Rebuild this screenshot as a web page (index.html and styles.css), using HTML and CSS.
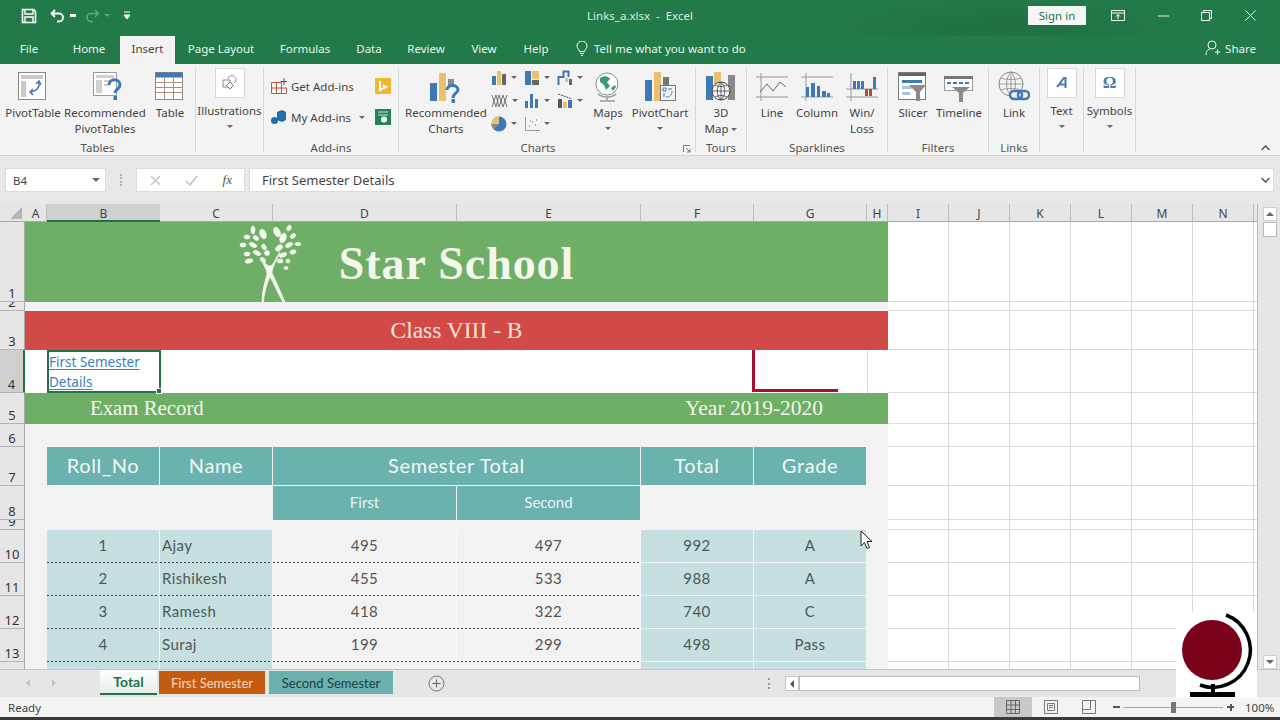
FILE: index.html
```html
<!DOCTYPE html>
<html lang="en">
<head>
  <meta charset="UTF-8">
  <meta name="viewport" content="width=device-width, initial-scale=1.0">
  <title>Links_a.xlsx - Excel</title>
  <link rel="stylesheet" href="styles.css">
</head>
<body>
<div class="app">

  <!-- title bar -->
  <div class="titlebar">
    <div class="qat">
      <svg width="16" height="16" viewBox="0 0 16 16"><path d="M1.5 1.5h11l2 2v11h-13z" fill="none" stroke="#fff" stroke-width="1.6"/><path d="M4 2v4h8V2M4 14V9h8v5" fill="none" stroke="#fff" stroke-width="1.4"/></svg>
      <svg class="undo" width="16" height="14" viewBox="0 0 16 14"><path d="M5 1L1.5 4.5 5 8M2 4.5h7a4 4 0 0 1 0 8H7" fill="none" stroke="#fff" stroke-width="1.8"/></svg>
      <span class="mini-caret white"></span>
      <svg class="redo" width="16" height="14" viewBox="0 0 16 14"><path d="M11 1l3.500 3.500L11 8M14 4.500H7a4 4 0 0 0 0 8h2" fill="none" stroke="#5fa67d" stroke-width="1.6"/></svg>
      <span class="mini-caret dim"></span>
      <svg class="custom" width="8" height="9" viewBox="0 0 8 9"><path d="M1 1h6M1 4h6L4 8z" stroke="#fff" fill="#fff"/></svg>
    </div>
    <div class="doc-title">Links_a.xlsx&nbsp; - &nbsp;Excel</div>
    <button class="signin">Sign in</button>
    <div class="winbtns">
      <svg width="14" height="12" viewBox="0 0 14 12"><path d="M.5.500h13v10H.5zM.5 3h13M7 9V4.500M5 6.500l2-2 2 2" fill="none" stroke="#fff"/></svg>
      <svg width="11" height="2" viewBox="0 0 11 2"><path d="M0 1h11" stroke="#e8f2ec"/></svg>
      <svg width="11" height="11" viewBox="0 0 11 11"><path d="M.5 2.500h8v8h-8zM2.500 2.500v-2h8v8h-2" fill="none" stroke="#fff"/></svg>
      <svg width="11" height="11" viewBox="0 0 11 11"><path d="M.5.500l10 10M10.500.500l-10 10" stroke="#fff"/></svg>
    </div>
  </div>

  <!-- tabs -->
  <div class="tabs">
    <span class="tab t-file">File</span>
    <span class="tab t-home">Home</span>
    <span class="tab active">Insert</span>
    <span class="tab t-layout">Page Layout</span>
    <span class="tab t-formulas">Formulas</span>
    <span class="tab t-data">Data</span>
    <span class="tab t-review">Review</span>
    <span class="tab t-view">View</span>
    <span class="tab t-help">Help</span>
    <svg class="bulb" width="12" height="15" viewBox="0 0 12 15"><path d="M3.500 10.500C3 8 1 7.500 1 5a5 5 0 0 1 10 0c0 2.500-2 3-2.500 5.500zM4 12.500h4M5 14.500h2" fill="none" stroke="#fff"/></svg>
    <span class="tab tellme">Tell me what you want to do</span>
    <span class="share">
      <svg width="16" height="16" viewBox="0 0 16 16"><circle cx="7" cy="5" r="4" fill="none" stroke="#fff"/><path d="M1 15c0-4 2-5.500 4-6M10 12h5M12.500 9.500v5" fill="none" stroke="#fff"/></svg>
      Share
    </span>
  </div>

  <!-- ribbon -->
  <div class="ribbon">
    <div class="group g-tables">
      <div class="gbody pad6">
        <div class="btn w54">
          <svg class="ico" width="30" height="30" viewBox="0 0 30 30"><rect x=".5" y=".5" width="27" height="27" fill="#fff" stroke="#8a8a8a"/><path d="M3 3h22v4H3zM3 9h5v16H3z" fill="#c9c9c9"/><path d="M21 10c1 5-2 9-8 10M18 12l3-3 2 4M15 17l-3 3 3 3" fill="none" stroke="#3f78b5" stroke-width="1.500"/></svg>
          <span>PivotTable</span>
        </div>
        <div class="btn w84 gap3">
          <svg class="ico nudge" width="30" height="30" viewBox="0 0 30 30"><rect x=".5" y=".5" width="23" height="23" fill="#fff" stroke="#9a9a9a"/><path d="M3 3h18v3H3zM3 8h6v13H3zM11 8h8v2h-8zM11 12h5v2h-5z" fill="#cfcfcf"/><path d="M16 13c0-7 11-7 11 0 0 4-5 4-5 8" fill="none" stroke="#3f78b5" stroke-width="3"/><rect x="20.500" y="24" width="3.500" height="4" fill="#3f78b5"/></svg>
          <span>Recommended<br>PivotTables</span>
        </div>
        <div class="btn w46">
          <svg class="ico" width="30" height="30" viewBox="0 0 30 30"><rect x=".5" y=".5" width="27" height="27" fill="#fff" stroke="#8a8a8a"/><rect x=".5" y=".5" width="27" height="5" fill="#3f78b5"/><path d="M1 10.500h27M1 15.500h27M1 20.500h27M9.500 5v23M18.500 5v23" stroke="#b58b7a"/></svg>
          <span>Table</span>
        </div>
      </div>
      <div class="glabel">Tables</div>
    </div>

    <div class="group g-illus">
      <div class="gbody">
        <div class="btn full boxed">
          <div class="box">
            <svg width="16" height="16" viewBox="0 0 16 16"><path d="M1 5h7v7H1z" fill="none" stroke="#8a8a8a"/><path d="M6 4a4 4 0 1 1 6 4" fill="none" stroke="#6f9fca"/><path d="M8 7l3.500 3.500L8 14l-3.500-3.500z" fill="#fff" stroke="#777"/></svg>
          </div>
          <span>Illustrations</span>
          <i class="caret"></i>
        </div>
      </div>
    </div>

    <div class="group g-addins">
      <div class="gbody addins">
        <div class="addin-row">
          <svg width="16" height="16" viewBox="0 0 16 16"><path d="M.5 4.500h10v11H.5zM.5 10h15v5.500h-5M5.500 4.500v11" fill="none" stroke="#c0574a"/><path d="M13 0v7M9.500 3.500h7" stroke="#555"/></svg>
          <span class="addin-name">Get Add-ins</span>
          <svg class="addin-end" width="16" height="16" viewBox="0 0 16 16"><rect width="16" height="16" rx="1" fill="#f2b632"/><path d="M5 3v9l6-3-3-1.500" fill="none" stroke="#fff" stroke-width="2"/></svg>
        </div>
        <div class="addin-row">
          <svg width="16" height="16" viewBox="0 0 16 16"><path d="M6 3l5-2 4 2v8l-4 2-5-2z" fill="#1f6fb2"/><circle cx="3.500" cy="11.500" r="3.500" fill="#1f6fb2"/></svg>
          <span class="addin-name">My Add-ins</span>
          <i class="caret inline wide"></i>
          <svg class="addin-end" width="16" height="16" viewBox="0 0 16 16"><rect width="16" height="16" fill="#21845a"/><path d="M3 3h10M3 6h10" stroke="#cfe7da"/><circle cx="9" cy="10.500" r="3" fill="#fff"/></svg>
        </div>
      </div>
      <div class="glabel">Add-ins</div>
    </div>

    <div class="group g-charts">
      <div class="gbody pad5">
        <div class="btn w84">
          <svg class="ico" width="34" height="32" viewBox="0 0 34 32"><rect x="1" y="12" width="7" height="18" fill="#3f78b5"/><rect x="10" y="2" width="7" height="28" fill="#e8c16a"/><rect x="19" y="8" width="6" height="8" fill="#8a8a8a"/><path d="M18 19c0-6 11-6 11 0 0 3-5 3-5 8" fill="none" stroke="#3f78b5" stroke-width="3"/><rect x="22.500" y="28" width="3.500" height="4" fill="#3f78b5"/></svg>
          <span>Recommended<br>Charts</span>
        </div>
        <div class="minis">
          <div class="mini"><svg width="16" height="16" viewBox="0 0 16 16"><rect x="1" y="6" width="4" height="9" fill="#3f78b5"/><rect x="6" y="1" width="4" height="14" fill="#e8c16a"/><rect x="11" y="4" width="4" height="11" fill="#666"/></svg><i class="caret inline"></i></div>
          <div class="mini"><svg width="16" height="16" viewBox="0 0 16 16"><rect x="1" y="1" width="6" height="14" fill="#3f78b5"/><rect x="8" y="1" width="7" height="8" fill="#e8c16a"/><rect x="8" y="10" width="7" height="5" fill="#666"/></svg><i class="caret inline"></i></div>
          <div class="mini"><svg width="16" height="16" viewBox="0 0 16 16"><path d="M1.500 15V7h5V1.500h5V7M13 9v6" fill="none" stroke="#3f78b5" stroke-width="2"/><rect x="8" y="8" width="3" height="4" fill="#e8c16a"/><rect x="12" y="9" width="3" height="6" fill="#666"/></svg><i class="caret inline"></i></div>
          <div class="mini"><svg width="17" height="16" viewBox="0 0 17 16"><path d="M1 14L5 2l3 12 4-12 4 12M1 2l4 12 3-12 4 12 4-12" fill="none" stroke="#666" stroke-width=".9"/></svg><i class="caret inline"></i></div>
          <div class="mini"><svg width="16" height="16" viewBox="0 0 16 16"><path d="M1 8h3v7H1zM6 1h3v14H6zM11 6h3v9h-3z" fill="#3f78b5"/></svg><i class="caret inline"></i></div>
          <div class="mini"><svg width="16" height="16" viewBox="0 0 16 16"><rect x="1" y="6" width="4" height="9" fill="#555"/><rect x="6" y="9" width="4" height="6" fill="#e8c16a"/><rect x="11" y="7" width="4" height="8" fill="#3f78b5"/><path d="M1 1l6 2 8 3" stroke="#555" stroke-dasharray="2 1"/></svg><i class="caret inline"></i></div>
          <div class="mini"><svg width="16" height="16" viewBox="0 0 16 16"><circle cx="8" cy="8" r="7.500" fill="#3f78b5"/><path d="M8 8V.5A7.500 7.500 0 0 0 .5 8z" fill="#e8c16a"/><path d="M8 8H.5A7.500 7.500 0 0 0 3 13.500z" fill="#8a8a8a"/></svg><i class="caret inline"></i></div>
          <div class="mini"><svg width="16" height="16" viewBox="0 0 16 16"><path d="M1.500 1v13.500H16" fill="none" stroke="#999"/><path d="M5 10h1M8 6h1M11 9h1M12 4h1M6 5h1" stroke="#c08a6a" stroke-width="1.500"/></svg><i class="caret inline"></i></div>
        </div>
        <div class="btn w38">
          <svg class="ico" width="30" height="32" viewBox="0 0 30 32"><circle cx="14" cy="13" r="11" fill="#fff" stroke="#8a8a8a"/><path d="M7 7c4-3 9-2 10 1l-3 3 3 4-4 4-2-5-4-3zM18 17l4-3 1 2-3 4z" fill="#3d9a78"/><path d="M5 23c5 4 13 4 18 0M14 26v3M7 30h15" fill="none" stroke="#999" stroke-width="1.500"/></svg>
          <span>Maps</span>
          <i class="caret"></i>
        </div>
        <div class="btn w66">
          <svg class="ico" width="32" height="32" viewBox="0 0 32 32"><rect x="1" y="9" width="7" height="21" fill="#3f78b5"/><rect x="10" y="1" width="7" height="29" fill="#e8c16a"/><rect x="19" y="6" width="6" height="10" fill="#777"/><rect x="16.500" y="14.500" width="15" height="15" fill="#f3f3f3" stroke="#777"/><path d="M19 17h3v3h-3zM24 18h4M20 22v4M28 20c0 4-2 6-6 6" fill="none" stroke="#3f78b5"/></svg>
          <span>PivotChart</span>
          <i class="caret"></i>
        </div>
      </div>
      <div class="glabel charts-label">Charts</div>
      <svg class="launcher" width="8" height="8" viewBox="0 0 8 8"><path d="M.5 7V.5H7M3 3l4 4M7 4v3H4" fill="none" stroke="#777"/></svg>
    </div>

    <div class="group g-tours">
      <div class="gbody">
        <div class="btn full">
          <svg class="ico" width="32" height="32" viewBox="0 0 32 32"><rect x="1" y="5" width="7" height="24" fill="#3f78b5"/><rect x="9" y="1" width="7" height="12" fill="#e8c16a"/><rect x="23" y="4" width="7" height="25" fill="#8a8a8a"/><circle cx="16" cy="20" r="9" fill="#f3f3f3" stroke="#444"/><path d="M7 20h18M16 11v18M10 14c4 2 8 2 12 0M10 26c4-2 8-2 12 0M16 11c-5 5-5 13 0 18M16 11c5 5 5 13 0 18" fill="none" stroke="#444" stroke-width=".8"/></svg>
          <span>3D<br>Map<i class="caret inline tight"></i></span>
        </div>
      </div>
      <div class="glabel">Tours</div>
    </div>

    <div class="group g-spark">
      <div class="gbody pad2">
        <div class="btn w46">
          <svg class="ico" width="32" height="28" viewBox="0 0 32 28"><path d="M5 0v28M0 4h32M0 24h32" stroke="#999"/><path d="M4 19l7-8 6 7 7-9 6 5" fill="none" stroke="#666"/></svg>
          <span>Line</span>
        </div>
        <div class="btn w44">
          <svg class="ico" width="32" height="28" viewBox="0 0 32 28"><path d="M5 0v28M0 4h32M0 24h32" stroke="#999"/><path d="M5 14h3v10H5zM10 10h4v14h-4zM16 13h3v11h-3zM21 18h4v6h-4zM26 20h3v4h-3z" fill="#3f78b5"/></svg>
          <span>Column</span>
        </div>
        <div class="btn w46">
          <svg class="ico" width="32" height="28" viewBox="0 0 32 28"><path d="M5 0v28M0 16h32M0 24h32" stroke="#999"/><path d="M7 8h3v8H7zM11 8h3v8h-3zM15 8h3v8h-3zM27 4h3v12h-3z" fill="#3f78b5"/><path d="M19 16h3v7h-3zM23 16h3v7h-3z" fill="#b5483a"/></svg>
          <span>Win/<br>Loss</span>
        </div>
      </div>
      <div class="glabel">Sparklines</div>
    </div>

    <div class="group g-filters">
      <div class="gbody pad2">
        <div class="btn w46">
          <svg class="ico" width="30" height="30" viewBox="0 0 30 30"><rect x=".5" y=".5" width="27" height="27" fill="#fff" stroke="#7a7a7a"/><rect x="1" y="1" width="27" height="3" fill="#666"/><path d="M4 8h20v3H4z" fill="#3f78b5"/><path d="M4 14h10v3H4zM4 20h8v3H4z" fill="#a9c3de"/><path d="M11 13h17l-6 7v9h-4v-9z" fill="#8a8a8a"/></svg>
          <span>Slicer</span>
        </div>
        <div class="btn w46">
          <svg class="ico" width="30" height="30" viewBox="0 0 30 30"><rect x=".5" y="4.500" width="28" height="14" fill="#fff" stroke="#999"/><rect y="4" width="29" height="3" fill="#777"/><path d="M3 11h4M9 11h4M15 11h4M21 11h4" stroke="#3f78b5" stroke-width="2"/><path d="M8 15h18l-7 6v9h-4v-9z" fill="#8a8a8a"/></svg>
          <span>Timeline</span>
        </div>
      </div>
      <div class="glabel">Filters</div>
    </div>

    <div class="group g-links">
      <div class="gbody">
        <div class="btn full">
          <svg class="ico" width="32" height="32" viewBox="0 0 32 32"><circle cx="13" cy="13" r="12" fill="none" stroke="#8a8a8a"/><path d="M1 13h24M13 1v24M3 7c6 2 14 2 20 0M3 19c6-2 14-2 20 0M13 1c-6 7-6 17 0 24M13 1c6 7 6 17 0 24" fill="none" stroke="#8a8a8a" stroke-width=".8"/><rect x="12" y="20" width="12" height="8" rx="4" fill="#f3f3f3" stroke="#3f78b5" stroke-width="2.500"/><rect x="20" y="20" width="11" height="8" rx="4" fill="none" stroke="#3f78b5" stroke-width="2.500"/></svg>
          <span>Link</span>
        </div>
      </div>
      <div class="glabel">Links</div>
    </div>

    <div class="group g-text">
      <div class="gbody">
        <div class="btn full boxed">
          <div class="box"><svg width="12" height="12" viewBox="0 0 12 12"><path d="M1 10L8 1h1.500v10M3.500 7.500H10" fill="none" stroke="#4a79ad" stroke-width="2"/></svg></div>
          <span>Text</span>
          <i class="caret"></i>
        </div>
      </div>
    </div>

    <div class="group g-symbols">
      <div class="gbody">
        <div class="btn full boxed">
          <div class="box omega">&#937;</div>
          <span>Symbols</span>
          <i class="caret"></i>
        </div>
      </div>
    </div>

    <svg class="collapse" width="9" height="6" viewBox="0 0 9 6"><path d="M.5 5l4-4 4 4" fill="none" stroke="#555" stroke-width="1.500"/></svg>
  </div>

  <!-- formula bar -->
  <div class="formula">
    <div class="namebox">B4<i class="caret"></i></div>
    <div class="fdots"></div>
    <div class="fbtns">
      <svg width="11" height="11" viewBox="0 0 11 11"><path d="M1 1l9 9M10 1l-9 9" stroke="#c4c4c4" stroke-width="1.500"/></svg>
      <svg width="13" height="11" viewBox="0 0 13 11"><path d="M1 6l4 4 7-9" fill="none" stroke="#c4c4c4" stroke-width="1.500"/></svg>
      <span class="fx">fx</span>
    </div>
    <div class="finput">First Semester Details
      <svg width="9" height="6" viewBox="0 0 9 6"><path d="M.5 1l4 4 4-4" fill="none" stroke="#555" stroke-width="1.500"/></svg>
    </div>
  </div>

  <!-- sheet -->
  <div class="sheetwrap">
    <div class="sheet">
      <div class="corner"><i></i></div>
      <div class="ch">A</div><div class="ch sel">B</div><div class="ch">C</div><div class="ch">D</div><div class="ch">E</div><div class="ch">F</div><div class="ch">G</div><div class="ch">H</div><div class="ch">I</div><div class="ch">J</div><div class="ch">K</div><div class="ch">L</div><div class="ch">M</div><div class="ch">N</div><div class="ch"></div>

      <div class="rh">1</div>
      <div class="c green title s8">
        <svg class="tree" width="62" height="78" viewBox="0 0 62 78">
          <g fill="#f4f8ee" stroke="#f4f8ee" stroke-width=".7">
            <ellipse cx="14" cy="6" rx="2" ry="4"/><ellipse cx="24" cy="10" rx="3" ry="5" transform="rotate(-20 24 10)"/>
            <ellipse cx="38" cy="8" rx="3" ry="5" transform="rotate(-25 38 8)"/><ellipse cx="50" cy="4" rx="2" ry="3" transform="rotate(30 50 4)"/>
            <ellipse cx="8" cy="13" rx="3" ry="2"/><ellipse cx="17" cy="14" rx="3" ry="2" transform="rotate(35 17 14)"/>
            <ellipse cx="44" cy="14" rx="3" ry="5" transform="rotate(20 44 14)"/><ellipse cx="54" cy="12" rx="3" ry="2" transform="rotate(-35 54 12)"/>
            <ellipse cx="4" cy="21" rx="3" ry="2"/><ellipse cx="14" cy="21" rx="4" ry="2" transform="rotate(25 14 21)"/>
            <ellipse cx="25" cy="23" rx="3" ry="2" transform="rotate(60 25 23)"/><ellipse cx="40" cy="24" rx="4" ry="2.500" transform="rotate(-40 40 24)"/>
            <ellipse cx="50" cy="21" rx="4" ry="2" transform="rotate(-25 50 21)"/><ellipse cx="59" cy="20" rx="3" ry="1.500"/>
            <ellipse cx="8" cy="30" rx="3" ry="2"/><ellipse cx="18" cy="29" rx="4" ry="2" transform="rotate(25 18 29)"/>
            <ellipse cx="44" cy="31" rx="4" ry="2" transform="rotate(-20 44 31)"/><ellipse cx="54" cy="28" rx="3" ry="2" transform="rotate(-15 54 28)"/>
            <ellipse cx="10" cy="37" rx="4" ry="2" transform="rotate(-15 10 37)"/><ellipse cx="24" cy="36" rx="3" ry="2" transform="rotate(40 24 36)"/>
            <ellipse cx="41" cy="37" rx="3" ry="2"/><ellipse cx="49" cy="37" rx="2" ry="2"/><ellipse cx="47" cy="44" rx="2" ry="1.500"/>
            <circle cx="28" cy="29" r="2.500"/>
            <path d="M22 33c2 8 5 11 6 16 0 4-5 14-5 29h1.500c1-11 4-20 6.500-25 4 6 8 17 13 25h2c-4-9-9-21-13-29 0-6 6-15 8-21-4 5-6 13-10 14-4 0-6-5-9-9z"/>
          </g>
        </svg>
        Star School
      </div>
      <div class="blank"></div>

      <div class="rh">2</div><div class="c s8"></div><div class="blank"></div>

      <div class="rh">3</div><div class="c red s8">Class VIII - B</div><div class="blank"></div>

      <div class="rh sel">4</div>
      <div class="c white"></div>
      <div class="c white active-cell"><a>First Semester<br>Details</a><i class="handle"></i></div>
      <div class="c white s4"></div>
      <div class="c white"><i class="crimson"></i></div>
      <div class="c white lined"></div>
      <div class="blank"></div>

      <div class="rh">5</div>
      <div class="c green exam s5">Exam Record</div>
      <div class="c green year s2">Year 2019-2020</div>
      <div class="c green"></div>
      <div class="blank"></div>

      <div class="rh">6</div><div class="c s8"></div><div class="blank"></div>

      <div class="rh">7</div>
      <div class="c"></div>
      <div class="c head">Roll_No</div>
      <div class="c head">Name</div>
      <div class="c head s2">Semester Total</div>
      <div class="c head">Total</div>
      <div class="c head">Grade</div>
      <div class="c"></div>
      <div class="blank"></div>

      <div class="rh">8</div>
      <div class="c s3"></div>
      <div class="c subhead">First</div>
      <div class="c subhead">Second</div>
      <div class="c s3"></div>
      <div class="blank"></div>

      <div class="rh">9</div><div class="c s8"></div><div class="blank"></div>

      <div class="rh">10</div>
      <div class="c"></div><div class="c pale dot mid">1</div><div class="c pale dot left">Ajay</div><div class="c dot mid">495</div><div class="c dot mid">497</div><div class="c pale mid">992</div><div class="c pale mid">A</div><div class="c"></div>
      <div class="blank"></div>

      <div class="rh">11</div>
      <div class="c"></div><div class="c pale dot mid">2</div><div class="c pale dot left">Rishikesh</div><div class="c dot mid">455</div><div class="c dot mid">533</div><div class="c pale mid">988</div><div class="c pale mid">A</div><div class="c"></div>
      <div class="blank"></div>

      <div class="rh">12</div>
      <div class="c"></div><div class="c pale dot mid">3</div><div class="c pale dot left">Ramesh</div><div class="c dot mid">418</div><div class="c dot mid">322</div><div class="c pale mid">740</div><div class="c pale mid">C</div><div class="c"></div>
      <div class="blank"></div>

      <div class="rh">13</div>
      <div class="c"></div><div class="c pale dot mid">4</div><div class="c pale dot left">Suraj</div><div class="c dot mid">199</div><div class="c dot mid">299</div><div class="c pale mid">498</div><div class="c pale mid">Pass</div><div class="c"></div>
      <div class="blank"></div>

      <div class="rh"></div>
      <div class="c"></div><div class="c pale"></div><div class="c pale"></div><div class="c"></div><div class="c"></div><div class="c pale"></div><div class="c pale"></div><div class="c"></div>
      <div class="blank"></div>
    </div>

    <div class="vscroll">
      <div class="sbtn"><span class="up"></span></div>
      <div class="thumb"></div>
      <div class="sfill"></div>
      <div class="sbtn"><span class="down"></span></div>
    </div>
  </div>

  <!-- sheet tabs -->
  <div class="sheetbar">
    <div class="nav"><span class="arrow l"></span><span class="arrow r"></span></div>
    <div class="stab total">Total</div>
    <div class="stab first">First Semester</div>
    <div class="stab second">Second Semester</div>
    <svg class="addsheet" width="17" height="17" viewBox="0 0 17 17"><circle cx="8.500" cy="8.500" r="7.500" fill="none" stroke="#777"/><path d="M8.500 4.500v8M4.500 8.500h8" stroke="#666"/></svg>
    <div class="bardots"></div>
    <div class="hscroll"><span class="hbtn"><span class="left-arrow"></span></span><span class="hthumb"></span></div>
  </div>

  <!-- status bar -->
  <div class="status">
    <span class="ready">Ready</span>
    <div class="views">
      <span class="view on"><svg width="14" height="14" viewBox="0 0 14 14"><path d="M.5.500h13v13H.5zM.5 5h13M.5 9.500h13M5 .5v13M9.500.5v13" fill="none" stroke="#666"/></svg></span>
      <span class="view"><svg width="14" height="14" viewBox="0 0 14 14"><path d="M.5.500h13v13H.5zM3.500 3.500h7v7h-7zM5 5.500h4M5 7.500h4" fill="none" stroke="#777"/></svg></span>
      <span class="view"><svg width="14" height="14" viewBox="0 0 14 14"><path d="M.5.500h13v13H.5zM.5 9.500h8V.5" fill="none" stroke="#777"/></svg></span>
    </div>
    <div class="zoom">
      <span class="zsign"></span>
      <span class="ztrack"><i></i></span>
      <span class="zsign plus"></span>
      <span class="zval">100%</span>
    </div>
  </div>

  <!-- things lying over the window -->
  <svg class="cursor" width="14" height="20" viewBox="0 0 14 20"><path d="M1 1v15l3.500-3.500 2.500 6 2.500-1-2.500-6H12z" fill="#fff" stroke="#222"/></svg>
  <div class="watermark">
    <svg width="80" height="86" viewBox="0 0 80 86">
      <circle cx="36" cy="38" r="30" fill="#7b0019"/>
      <path d="M50 3A37 37 0 1 1 24 73" fill="none" stroke="#000" stroke-width="3.500"/>
      <path d="M37 72v8" stroke="#000" stroke-width="4"/>
      <rect x="14" y="80" width="45" height="5" fill="#000"/>
    </svg>
  </div>
</div>
</body>
</html>
```

FILE: styles.css
```css
* {
  box-sizing: border-box;
}

html, body {
  margin: 0;
  height: 100%;
  overflow: hidden;
}

body {
  font-family: "Noto Sans", "Open Sans", sans-serif;
  font-size: 11.5px;
  color: #444;
  background: #f3f3f3;
}

.app {
  position: relative;
  width: 1280px;
  height: 720px;
  overflow: hidden;
  display: flex;
  flex-direction: column;
}

/* title bar */
.titlebar {
  height: 36px;
  padding-bottom: 5px;
  background: radial-gradient(ellipse 200px 40px at 1000px 30px, #1f6f42, #237a49 90%);
  background-color: #237a49;
  display: flex;
  align-items: center;
  color: #dcebe2;
  position: relative;
}

.qat {
  display: flex;
  align-items: center;
  padding-left: 21px;
  width: 200px;
}

.undo { margin-left: 13px; }
.redo { margin-left: 8px; }
.custom { margin-left: 13px; }

.mini-caret {
  width: 0;
  height: 0;
  margin-left: 4px;
  border: 3px solid transparent;
  border-top-color: #fff;
  border-bottom: 0;
}

.mini-caret.dim { border-top-color: #5fa67d; }

.doc-title {
  flex: 1;
  text-align: center;
  padding-left: 52px;
}

.signin {
  width: 58px;
  height: 19px;
  border: 0;
  padding: 0;
  background: #f4f7f4;
  color: #217346;
  font: 11.5px "Noto Sans", sans-serif;
  margin-right: 25px;
}

.winbtns {
  width: 169px;
  display: flex;
  align-items: center;
  justify-content: space-between;
  padding: 0 24px 0 0;
}

/* tabs */
.tabs {
  height: 28px;
  background: #237a49;
  display: flex;
  align-items: stretch;
  color: #eaf3ee;
  position: relative;
}

.tab {
  display: flex;
  align-items: center;
  justify-content: center;
  padding-bottom: 3px;
}

.t-file { width: 58px; }
.t-home { width: 62px; }
.tab.active { width: 55px; background: #f3f3f3; color: #444; }
.t-layout { width: 92px; }
.t-formulas { width: 76px; }
.t-data { width: 52px; }
.t-review { width: 62px; }
.t-view { width: 54px; }
.t-help { width: 50px; }
.bulb { align-self: center; margin: -3px 0 0 15px; }
.tellme { margin-left: 6px; }

.share {
  position: absolute;
  right: 24px;
  top: 4px;
  display: flex;
  align-items: center;
  gap: 4px;
}

/* ribbon */
.ribbon {
  height: 92px;
  background: #f3f3f3;
  border-bottom: 1px solid #d2d2d2;
  display: flex;
  padding-top: 4px;
  position: relative;
}

.group {
  height: 84px;
  border-right: 1px solid #d8d8d8;
  display: flex;
  flex-direction: column;
  position: relative;
}

.g-tables { width: 196px; }
.g-illus { width: 68px; }
.g-addins { width: 135px; }
.g-charts { width: 297px; }
.g-tours { width: 51px; }
.g-spark { width: 141px; }
.g-filters { width: 101px; }
.g-links { width: 51px; }
.g-text { width: 44px; }
.g-symbols { width: 52px; }

.gbody {
  height: 73px;
  flex: none;
  display: flex;
}

.pad6 { padding-left: 6px; }
.pad5 { padding-left: 5px; }
.pad2 { padding-left: 2px; }

.glabel {
  height: 14px;
  flex: none;
  line-height: 14px;
  text-align: center;
  color: #555;
}

.charts-label { padding-right: 18px; }

.btn {
  display: flex;
  flex-direction: column;
  align-items: center;
  text-align: center;
  line-height: 16px;
  white-space: nowrap;
}

.btn .ico {
  height: 32px;
  margin: 3px 0 2px;
}

.btn .ico.nudge { margin-left: 6px; }

.w38 { width: 38px; }
.w44 { width: 44px; }
.w46 { width: 46px; }
.w54 { width: 54px; }
.w66 { width: 66px; }
.w84 { width: 84px; }
.gap3 { margin-left: 3px; }
.full { width: 100%; }

.box {
  width: 30px;
  height: 30px;
  background: #fff;
  border: 1px solid #d8d8d8;
  display: flex;
  align-items: center;
  justify-content: center;
  margin-bottom: 5px;
}

.omega {
  font: bold 17px "Liberation Serif", serif;
  color: #4a79ad;
}

.caret {
  display: block;
  width: 0;
  height: 0;
  margin-top: 6px;
  border: 3px solid transparent;
  border-top-color: #666;
  border-bottom: 0;
}

.caret.inline {
  display: inline-block;
  margin: 0 0 0 4px;
  vertical-align: middle;
}

.caret.tight { margin-left: 3px; }
.caret.wide { margin-left: 8px; }

.addins {
  flex-direction: column;
  padding: 10px 7px 0 7px;
  gap: 15px;
}

.addin-row {
  display: flex;
  align-items: center;
  height: 16px;
}

.addin-name { margin-left: 4px; }
.addin-end { margin-left: auto; }

.minis {
  width: 101px;
  padding: 0 0 0 3px;
  margin-top: -2px;
  display: grid;
  grid-template-columns: repeat(3, 33px);
  grid-auto-rows: 23px;
}

.mini {
  display: flex;
  align-items: center;
}

.launcher {
  position: absolute;
  right: 4px;
  bottom: -1px;
}

.collapse {
  position: absolute;
  right: 10px;
  bottom: 4px;
}

/* formula bar */
.formula {
  height: 48px;
  background: #e8e8e8;
  display: flex;
  align-items: flex-start;
  padding: 12px 6px 0 5px;
}

.namebox, .fbtns, .finput {
  height: 24px;
  background: #fff;
  border: 1px solid #dcdcdc;
  display: flex;
  align-items: center;
}

.namebox {
  width: 101px;
  padding: 0 5px 0 7px;
  justify-content: space-between;
}

.namebox .caret { margin: 0; border-width: 4px; border-bottom: 0; }

.fdots {
  width: 2px;
  height: 12px;
  margin: 6px 14px;
  border-left: 2px dotted #b0b0b0;
}

.fbtns {
  width: 109px;
  padding: 0 12px 0 13px;
  justify-content: space-between;
}

.fx {
  font: italic 13px "Liberation Serif", serif;
  color: #555;
}

.finput {
  flex: 1;
  margin-left: 4px;
  padding: 0 3px 0 12px;
  justify-content: space-between;
  font-size: 13px;
}

/* sheet */
.sheetwrap {
  height: 465px;
  display: flex;
  background: #e6e6e6;
}

.sheet {
  width: 1258px;
  height: 465px;
  overflow: hidden;
  display: grid;
  grid-template-columns: 25px 22px 113px 113px 184px 184px 113px 113px 21px 61px 61px 61px 61px 61px 61px 4px;
  grid-template-rows: 18px 80px 9px 39px 43px 31px 23px 39px 34px 10px 33px 33px 33px 33px 33px;
  background: #fff;
  border-right: 1px solid #bbb;
  font-family: "Lato", "Noto Sans", sans-serif;
  font-size: 15px;
  letter-spacing: .4px;
}

.corner {
  background: #e6e6e6;
  border-bottom: 1px solid #aaa;
  position: relative;
}

.corner i {
  position: absolute;
  right: 3px;
  bottom: 2px;
  border: 6px solid transparent;
  border-right-color: #b5b5b5;
  border-bottom-color: #b5b5b5;
}

.ch {
  background: #e6e6e6;
  border-right: 1px solid #bdbdbd;
  border-bottom: 1px solid #aaa;
  font: 12px "Noto Sans", sans-serif;
  letter-spacing: 0;
  color: #444;
  text-align: center;
  line-height: 19px;
}

.ch.sel {
  background: #d0d0d0;
  border-bottom: 2px solid #217346;
  border-right: 0;
}

.rh {
  background: #e6e6e6;
  border-bottom: 1px solid #b5b5b5;
  border-right: 1px solid #aaa;
  font: 13px/15px "Noto Sans", sans-serif;
  letter-spacing: 0;
  color: #333;
  display: flex;
  align-items: flex-end;
  justify-content: center;
  overflow: hidden;
}

.rh.sel {
  background: #d0d0d0;
  border-right: 2px solid #217346;
}

.c {
  background: #f2f2f2;
  color: #555;
  display: flex;
  align-items: center;
  justify-content: center;
  position: relative;
  white-space: nowrap;
  min-width: 0;
  padding-bottom: 1px;
}

.c.mid, .c.left { padding-bottom: 3px; }

.s2 { grid-column: span 2; }
.s3 { grid-column: span 3; }
.s4 { grid-column: span 4; }
.s5 { grid-column: span 5; }
.s8 { grid-column: span 8; }

.blank {
  grid-column: 10 / 17;
  border-bottom: 1px solid #d9d9d9;
  background: repeating-linear-gradient(90deg, #fff 0 60px, #d9d9d9 60px 61px);
}

.green { background: #6eae66; color: #f3f8ea; }
.red { background: #d24a48; color: #f8e6d8; font: 23.5px "Liberation Serif", serif; letter-spacing: 0; }
.white { background: #fff; }
.lined { border-left: 1px solid #d9d9d9; }

.title {
  font: bold 46px "Liberation Serif", serif;
  letter-spacing: .9px;
  padding: 2px 0 0;
}

.tree {
  position: absolute;
  left: 214px;
  top: 2px;
}

.exam {
  font: 20.8px "Liberation Serif", serif;
  letter-spacing: 0;
  justify-content: flex-start;
  padding-left: 65px;
}

.year {
  font: 21.5px "Liberation Serif", serif;
  letter-spacing: 0;
}

.active-cell {
  border: 2px solid #217346;
  justify-content: flex-start;
  align-items: flex-start;
  padding: 0;
  margin: 0 -1px 0 0;
  z-index: 2;
  font: 13.5px/20px "Noto Sans", sans-serif;
  letter-spacing: 0;
}

.active-cell a {
  color: #3b7fbd;
  text-decoration: underline;
  text-underline-offset: 2px;
}

.handle {
  position: absolute;
  right: -3px;
  bottom: -3px;
  width: 6px;
  height: 6px;
  background: #217346;
  border: 1px solid #fff;
}

.crimson {
  position: absolute;
  left: -2px;
  top: 0;
  width: 86px;
  height: 42px;
  border-left: 3px solid #a8102f;
  border-bottom: 3px solid #a8102f;
}

.head {
  background: #6bb1ae;
  color: #f2f9f8;
  font-size: 20px;
  letter-spacing: .6px;
  border-right: 1px solid #f2f2f2;
  border-bottom: 1px solid #f2f2f2;
  padding-bottom: 3px;
}

.subhead {
  background: #6bb1ae;
  color: #e9f5f4;
  font-size: 15px;
  letter-spacing: 0;
  border-right: 1px solid #f2f2f2;
  padding-bottom: 2px;
}

.pale {
  background-color: #c5e0de;
  color: #4a5a5a;
  border-right: 1px solid #eef6f5;
  border-bottom: 1px solid #eef6f5;
}

.c.dot {
  border-bottom: 0;
  background-image: repeating-linear-gradient(90deg, #444 0 2px, transparent 2px 4px);
  background-size: 100% 1px;
  background-position: bottom;
  background-repeat: no-repeat;
}

.left { justify-content: flex-start; padding-left: 2px; }
.c.dot:not(.pale) { border-right: 1px solid #fafafa; }

/* scrollbar */
.vscroll {
  width: 22px;
  padding: 3px 3px 0 5px;
  display: flex;
  flex-direction: column;
  gap: 1px;
}

.sbtn {
  height: 14px;
  background: #fff;
  border: 1px solid #cfcfcf;
  display: flex;
  align-items: center;
  justify-content: center;
}

.up, .down {
  border: 4px solid transparent;
  border-top: 0;
  border-bottom-color: #666;
}

.down {
  border-bottom: 0;
  border-top: 4px solid #666;
}

.thumb {
  height: 15px;
  background: #fff;
  border: 1px solid #bbb;
}

.sfill { flex: 1; }

/* sheet tabs */
.sheetbar {
  height: 28px;
  background: #e6e6e6;
  border-top: 1px solid #c4c4c4;
  display: flex;
  align-items: flex-start;
  position: relative;
}

.nav {
  width: 100px;
  padding: 9px 0 0 26px;
  display: flex;
  gap: 22px;
}

.arrow {
  border: 4px solid transparent;
}

.arrow.l { border-left: 0; border-right-color: #c4c4c4; }
.arrow.r { border-right: 0; border-left-color: #c4c4c4; }

.stab {
  height: 23px;
  margin-top: 1px;
  display: flex;
  align-items: center;
  justify-content: center;
  font-family: "Lato", "Noto Sans", sans-serif;
  font-size: 13px;
}

.total {
  width: 57px;
  height: 25px;
  margin-top: 0;
  background: linear-gradient(#fff, #e4f0e8);
  border-bottom: 2px solid #217346;
  color: #217346;
  font-weight: bold;
  font-size: 14px;
}

.first {
  width: 106px;
  margin-left: 2px;
  background: #c55a11;
  color: #f7dcc7;
}

.second {
  width: 124px;
  margin-left: 4px;
  background: #6bb1ae;
  color: #1d3f3d;
}

.addsheet {
  margin: 5px 0 0 35px;
}

.bardots {
  position: absolute;
  left: 768px;
  top: 8px;
  height: 11px;
  border-left: 2px dotted #999;
}

.hscroll {
  position: absolute;
  left: 785px;
  top: 6px;
  width: 473px;
  height: 15px;
  display: flex;
}

.hbtn {
  width: 14px;
  background: #fff;
  border: 1px solid #c8c8c8;
  display: flex;
  align-items: center;
  justify-content: center;
}

.left-arrow {
  border: 4px solid transparent;
  border-left: 0;
  border-right-color: #555;
}

.hthumb {
  width: 341px;
  background: #fff;
  border: 1px solid #bbb;
}

/* status bar */
.status {
  flex: 1;
  background: #f3f3f3;
  border-bottom: 3px solid #3a3a3a;
  display: flex;
  align-items: center;
  padding-left: 8px;
  position: relative;
  color: #444;
}

.views {
  position: absolute;
  left: 994px;
  top: 0;
  height: 20px;
  display: flex;
}

.view {
  width: 38px;
  display: flex;
  align-items: center;
  justify-content: center;
}

.view.on { background: #c8c8c8; }

.zoom {
  position: absolute;
  left: 1113px;
  top: 0;
  height: 20px;
  display: flex;
  align-items: center;
}

.zsign {
  width: 7px;
  height: 2px;
  background: #555;
  position: relative;
}

.zsign.plus::after {
  content: "";
  position: absolute;
  left: 2.500px;
  top: -2.500px;
  width: 2px;
  height: 7px;
  background: #555;
}

.ztrack {
  width: 100px;
  height: 1px;
  margin: 0 4px 0 3px;
  background: #a8a8a8;
  position: relative;
}

.ztrack i {
  position: absolute;
  left: 48px;
  top: -5px;
  width: 5px;
  height: 11px;
  background: #777;
}

.zval { margin-left: 11px; }

/* overlays */
.cursor {
  position: absolute;
  left: 860px;
  top: 530px;
}

.watermark {
  position: absolute;
  left: 1176px;
  top: 612px;
  width: 81px;
  height: 86px;
  background: #fff;
}
```
